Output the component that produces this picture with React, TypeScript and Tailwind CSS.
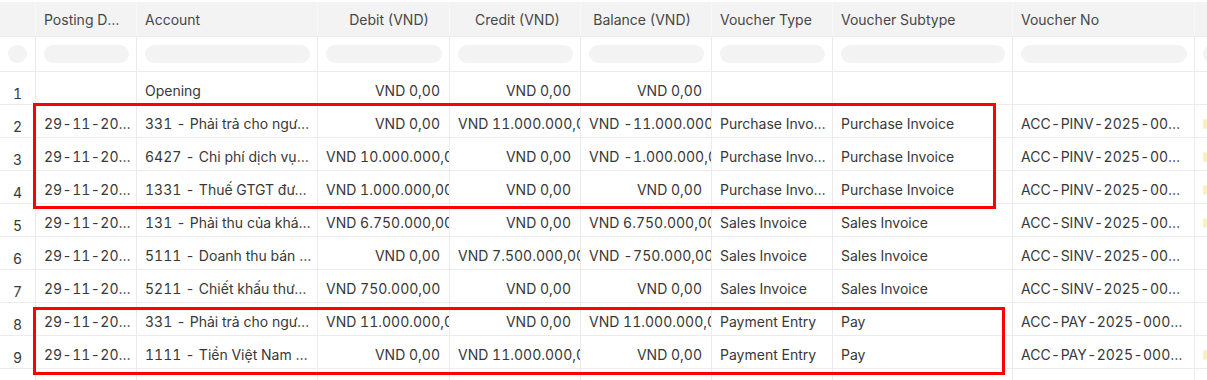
import type { ReactNode } from "react";

type Row = {
  no: number;
  date: string;
  account: string;
  debit: string;
  credit: string;
  balance: string;
  vtype: string;
  subtype: string;
  vno: string;
  mark?: boolean;
};

const rows: Row[] = [
  { no: 1, date: "", account: "Opening", debit: "VND 0,00", credit: "VND 0,00", balance: "VND 0,00", vtype: "", subtype: "", vno: "" },
  { no: 2, date: "29-11-2025", account: "331 - Phải trả cho người bán", debit: "VND 0,00", credit: "VND 11.000.000,00", balance: "VND -11.000.000,00", vtype: "Purchase Invoice", subtype: "Purchase Invoice", vno: "ACC-PINV-2025-00001", mark: true },
  { no: 3, date: "29-11-2025", account: "6427 - Chi phí dịch vụ mua ngoài", debit: "VND 10.000.000,00", credit: "VND 0,00", balance: "VND -1.000.000,00", vtype: "Purchase Invoice", subtype: "Purchase Invoice", vno: "ACC-PINV-2025-00001", mark: true },
  { no: 4, date: "29-11-2025", account: "1331 - Thuế GTGT được khấu trừ", debit: "VND 1.000.000,00", credit: "VND 0,00", balance: "VND 0,00", vtype: "Purchase Invoice", subtype: "Purchase Invoice", vno: "ACC-PINV-2025-00001", mark: true },
  { no: 5, date: "29-11-2025", account: "131 - Phải thu của khách hàng", debit: "VND 6.750.000,00", credit: "VND 0,00", balance: "VND 6.750.000,00", vtype: "Sales Invoice", subtype: "Sales Invoice", vno: "ACC-SINV-2025-00001", mark: true },
  { no: 6, date: "29-11-2025", account: "5111 - Doanh thu bán hàng hóa", debit: "VND 0,00", credit: "VND 7.500.000,00", balance: "VND -750.000,00", vtype: "Sales Invoice", subtype: "Sales Invoice", vno: "ACC-SINV-2025-00001" },
  { no: 7, date: "29-11-2025", account: "5211 - Chiết khấu thương mại", debit: "VND 750.000,00", credit: "VND 0,00", balance: "VND 0,00", vtype: "Sales Invoice", subtype: "Sales Invoice", vno: "ACC-SINV-2025-00001" },
  { no: 8, date: "29-11-2025", account: "331 - Phải trả cho người bán", debit: "VND 11.000.000,00", credit: "VND 0,00", balance: "VND 11.000.000,00", vtype: "Payment Entry", subtype: "Pay", vno: "ACC-PAY-2025-00001" },
  { no: 9, date: "29-11-2025", account: "1111 - Tiền Việt Nam - CT", debit: "VND 0,00", credit: "VND 11.000.000,00", balance: "VND 0,00", vtype: "Payment Entry", subtype: "Pay", vno: "ACC-PAY-2025-00001", mark: true },
];

const cols = "grid grid-cols-[36px_101px_181px_132px_131px_131px_121px_180px_182px_100px]";

const headers: { label: string; right?: boolean }[] = [
  { label: "" },
  { label: "Posting Date" },
  { label: "Account" },
  { label: "Debit (VND)", right: true },
  { label: "Credit (VND)", right: true },
  { label: "Balance (VND)", right: true },
  { label: "Voucher Type" },
  { label: "Voucher Subtype" },
  { label: "Voucher No" },
  { label: "" },
];

// the table font gives the hyphen a wide slot
function dashed(s: string): ReactNode {
  const parts = s.split("-");
  return parts.map((p, i) => (
    <span key={i}>
      {p}
      {i < parts.length - 1 && <span className="inline-block w-[10px] text-center">-</span>}
    </span>
  ));
}

function Text({ children, wide }: { children: string; wide?: boolean }) {
  return <div className={`w-full truncate pl-2 pt-[5px] ${wide ? "pr-[10px]" : "pr-[5px]"}`}>{dashed(children)}</div>;
}

function Num({ children }: { children: string }) {
  return <div className="w-full overflow-hidden whitespace-nowrap pl-2 pr-[9px] pt-[5px] text-right">{dashed(children)}</div>;
}

export default function App() {
  return (
    <div className="relative h-[380px] w-[1207px] overflow-hidden bg-white pt-[2px] font-['Inter',sans-serif] text-[14px] text-[#383838] tabular-nums">
      <div className="w-[1295px]">
        {/* header */}
        <div className={`${cols} h-[35px] border-b border-[#ececec] bg-[#f3f3f3]`}>
          {headers.map((h, i) => (
            <div key={i} className="flex items-center border-r border-[#f8f8f8] text-[#474747]">
              <div className={`w-full truncate pl-2 ${h.right ? "pr-5 text-right" : "pr-4"}`}>{h.label}</div>
            </div>
          ))}
        </div>
        {/* filters */}
        <div className={`${cols} h-[35px] border-b border-[#ececec]`}>
          {headers.map((_, i) => (
            <div key={i} className={`flex items-center border-r border-[#ececec] ${i === 0 ? "px-2" : "pl-2 pr-[7px]"}`}>
              <div className="h-[18px] w-full rounded-[9px] bg-[#f3f3f3]" />
            </div>
          ))}
        </div>
        {/* rows */}
        {rows.map((r) => (
          <div key={r.no} className={`${cols} h-[33px] border-b border-[#ececec]`}>
            <div className="flex items-center justify-center border-r border-[#ececec] pt-[11px]">{r.no}</div>
            <div className="flex items-center border-r border-[#ececec]"><Text>{r.date}</Text></div>
            <div className="flex items-center border-r border-[#ececec]"><Text>{r.account}</Text></div>
            <div className="flex items-center border-r border-[#ececec]"><Num>{r.debit}</Num></div>
            <div className="flex items-center border-r border-[#ececec]"><Num>{r.credit}</Num></div>
            <div className="flex items-center border-r border-[#ececec]"><Num>{r.balance}</Num></div>
            <div className="flex items-center border-r border-[#ececec]"><Text>{r.vtype}</Text></div>
            <div className="flex items-center border-r border-[#ececec]"><Text>{r.subtype}</Text></div>
            <div className="flex items-center border-r border-[#ececec]"><Text wide>{r.vno}</Text></div>
            <div className="flex items-center pl-2 pt-[5px]">
              {r.mark && <span className="h-[10px] w-[4px] rounded-sm bg-[#fbf0c0]" />}
            </div>
          </div>
        ))}
        <div className={`${cols} h-[33px]`}>
          {headers.map((_, i) => (
            <div key={i} className="border-r border-[#ececec]" />
          ))}
        </div>
      </div>

      {/* highlight boxes */}
      <div className="absolute left-[33px] top-[103px] h-[106px] w-[963px] border-[3px] border-[#ff0000]" />
      <div className="absolute left-[33px] top-[307px] h-[68px] w-[972px] border-[3px] border-[#ff0000]" />
    </div>
  );
}
